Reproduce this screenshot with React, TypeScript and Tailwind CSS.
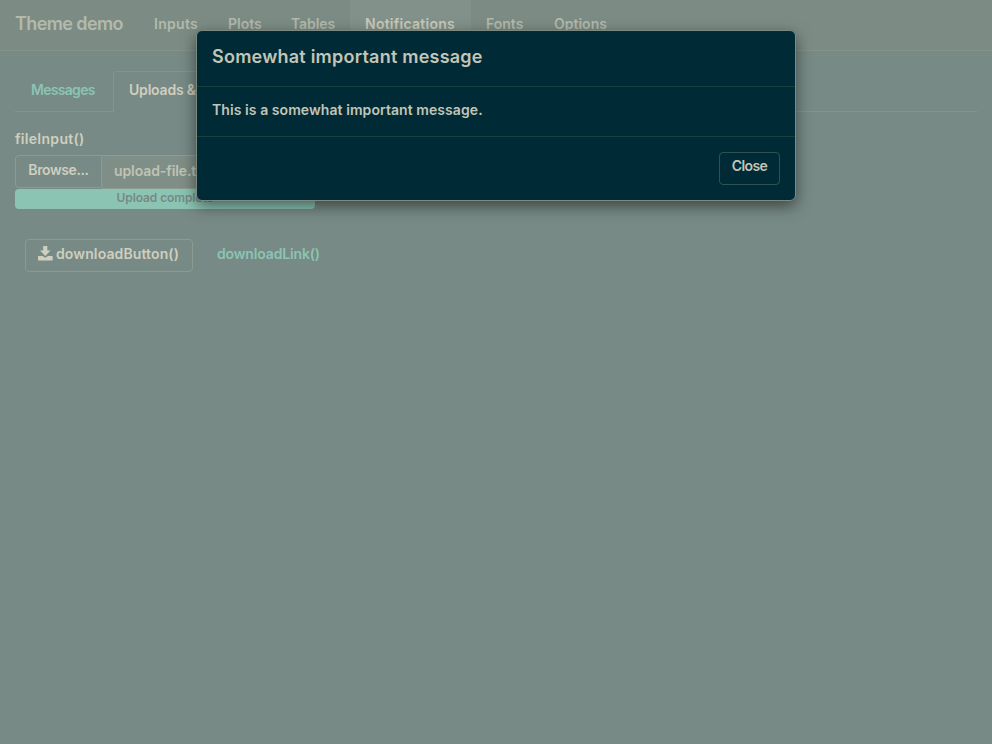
const navItems = [
  { label: 'Inputs', cls: 'w-[74px] text-[#b3baac] tracking-[0.3px]' },
  { label: 'Plots', cls: 'w-[63px] text-[#b3baac]' },
  { label: 'Tables', cls: 'w-[74px] text-[#b3baac] tracking-[-0.1px]' },
  { label: 'Notifications', cls: 'w-[121px] bg-[#82928a] text-[#c9cabb] tracking-[0.25px]' },
  { label: 'Fonts', cls: 'w-[68px] text-[#b3baac]' },
  { label: 'Options', cls: 'w-[83px] text-[#b3baac]' },
];

function DownloadIcon() {
  return (
    <svg className="mr-[3px] h-[15px] w-[15px] shrink-0" viewBox="0 0 15 15" fill="currentColor">
      <path d="M5.2 0h4.1v4.6h3.2L7.3 10 2 4.6h3.2zM.7 10h3.9l2.7 1.7L10 10h4q.7 0 .7.7v3q0 .8-.7.8H.7q-.7 0-.7-.8v-3Q0 10 .7 10z" />
    </svg>
  );
}

function Modal() {
  return (
    <div
      role="dialog"
      className="absolute left-[196px] top-[30px] flex h-[171px] w-[600px] flex-col rounded-[6px] border border-[#7d8a82] bg-[#002b36] text-[#c2c5b7] shadow-[0_5px_15px_rgba(0,0,0,0.5)]"
    >
      <header className="h-14 border-b border-[#18403f] px-[15px] pt-[12px]">
        <h4 className="text-[18px] leading-7 font-semibold tracking-[0.23px]">Somewhat important message</h4>
      </header>
      <div className="h-[50px] border-b border-[#18403f] px-[15px] pt-[13px]">
        <p className="leading-5 tracking-[0.07px]">This is a somewhat important message.</p>
      </div>
      <footer className="flex justify-end px-[15px] pt-[15px]">
        <button className="h-[33px] w-[61px] rounded border border-[#2f5351] pb-[5px] text-center leading-5 tracking-[-0.6px]">
          Close
        </button>
      </footer>
    </div>
  );
}

export default function App() {
  return (
    <div className="relative h-[744px] w-[992px] overflow-hidden bg-[#778a85] font-['Inter','Noto_Sans',sans-serif] text-[14px] font-semibold whitespace-nowrap text-[#cfcfc0]">
      <nav className="flex h-[51px] border-b border-[#84928a] bg-[#7c8c85] leading-5">
        <a className="w-[139px] pt-[14px] pl-[15px] text-[18px] tracking-[-0.6px] text-[#b3baac]">Theme demo</a>
        {navItems.map((n) => (
          <a key={n.label} className={`h-[50px] px-[15px] pt-[14px] ${n.cls}`}>
            {n.label}
          </a>
        ))}
      </nav>
      <main className="px-[15px] pt-5">
        <div className="flex h-[41px]">
          <a className="h-[41px] w-[98px] border-b border-[#84958d] pt-[9px] pl-4 leading-5 tracking-[-0.7px] text-[#8bc4b3]">
            Messages
          </a>
          <a className="h-[41px] w-[170px] rounded-t border border-b-0 border-[#84958d] pt-[8px] pl-[15px] leading-5 tracking-[-0.2px]">
            Uploads &amp; Downloads
          </a>
          <div className="flex-1 border-b border-[#84958d]" />
        </div>
        <label className="mt-4 block h-[27px] leading-[22px] tracking-[0.3px]">fileInput()</label>
        <div className="flex h-[34px] w-[300px]">
          <button className="h-[33px] w-[87px] rounded-l border border-[#8b9b92] pb-[5px] tracking-[-0.4px]">
            Browse...
          </button>
          <div className="h-[34px] flex-1 rounded-r border border-l-0 border-[#8f9c91] bg-[#7f8e86] pt-[5px] pl-3 leading-5 tracking-[-0.1px] text-[#bfc3b5]">
            upload-file.txt
          </div>
        </div>
        <div className="h-5 w-[300px] rounded bg-[#8bc4b3] text-center text-[12px] leading-[18px] tracking-[-0.1px] text-[#778a85]">
          Upload complete
        </div>
        <div className="mt-[30px] flex pl-[10px]">
          <button className="flex h-[33px] w-[168px] items-center rounded border border-[#8b9b92] pb-[5px] pl-3 tracking-[0.12px]">
            <DownloadIcon />
            downloadButton()
          </button>
          <a className="ml-6 pt-[5px] leading-5 tracking-[-0.15px] text-[#8bc4b3]">downloadLink()</a>
        </div>
      </main>
      <Modal />
    </div>
  );
}
